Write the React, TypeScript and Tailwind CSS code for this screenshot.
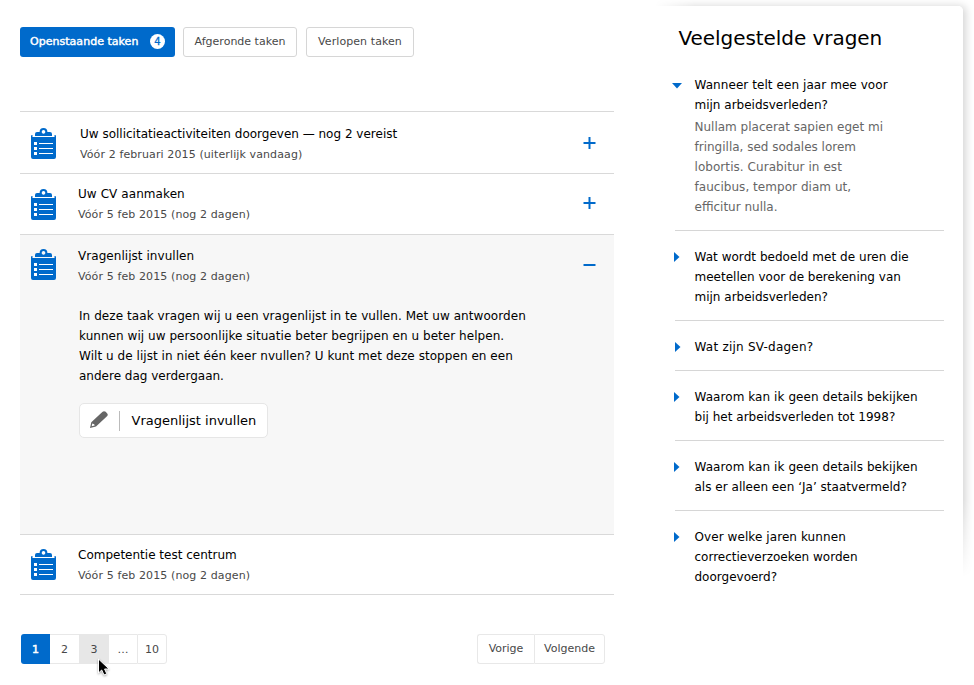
import type { ReactNode } from "react";

function ClipboardIcon() {
  return (
    <svg width="25" height="31" viewBox="0 0 25 31" className="block shrink-0">
      <path
        fillRule="evenodd"
        fill="#006acb"
        d="M0 8q0-1 1-1h.5v2H23.500V7H24q1 0 1 1V29q0 2-2 2H2Q0 31 0 29ZM4 8V6Q4 4 6 4H8.600A3.900 3.900 0 0 1 16.400 4H19Q21 4 21 6V8ZM12.500 2.100a1.800 1.800 0 1 0 .01 0Z"
      />
      <path d="M3 14h3v3H3zM3 19h3v3H3zM3 24h3v3H3z" fill="#fff" />
      <path d="M8 15h14v1H8zM8 20h14v1H8zM8 25h14v1H8z" fill="#fff" />
    </svg>
  );
}

function Toggle({ open }: { open?: boolean }) {
  return (
    <svg width="13" height="13" viewBox="0 0 13 13" className="block shrink-0">
      <path d="M.5 6h12" stroke="#006acb" strokeWidth="2" />
      {!open && <path d="M6.500 0v12" stroke="#006acb" strokeWidth="2" />}
    </svg>
  );
}

type TaskProps = {
  title: string;
  due: string;
  titleClass: string;
  rowClass: string;
  iconClass: string;
  textClass: string;
  toggle?: ReactNode;
  children?: ReactNode;
};

function Task({ title, due, titleClass, rowClass, iconClass, textClass, toggle, children }: TaskProps) {
  return (
    <li className={`flex border-t border-[#d9d9d9] pl-[11px] ${rowClass}`}>
      <div className={`w-[25px] shrink-0 ${iconClass}`}>
        <ClipboardIcon />
      </div>
      <div className={`min-w-0 flex-1 whitespace-nowrap ${textClass}`}>
        <h3 className={`text-[12px] leading-5 text-black ${titleClass}`}>{title}</h3>
        <p className="mt-px text-[11px] leading-5 tracking-[0.110px] text-[#484848]">{due}</p>
        {children}
      </div>
      {toggle}
    </li>
  );
}

type Faq = { lines: [string, string][]; shift?: boolean };

const faqs: Faq[] = [
  {
    lines: [
      ["Wat wordt bedoeld met de uren die", "tracking-[0.040px]"],
      ["meetellen voor de berekening van", ""],
      ["mijn arbeidsverleden?", ""],
    ],
  },
  { lines: [["Wat zijn SV-dagen?", "tracking-[0.230px]"]], shift: true },
  {
    lines: [
      ["Waarom kan ik geen details bekijken", "tracking-[0.070px]"],
      ["bij het arbeidsverleden tot 1998?", "tracking-[0.020px]"],
    ],
  },
  {
    lines: [
      ["Waarom kan ik geen details bekijken", "tracking-[0.070px]"],
      ["als er alleen een ‘Ja’ staatvermeld?", "tracking-[0.020px]"],
    ],
  },
  {
    lines: [
      ["Over welke jaren kunnen", "tracking-[0.080px]"],
      ["correctieverzoeken worden", ""],
      ["doorgevoerd?", ""],
    ],
  },
];

export default function App() {
  return (
    <div className="relative flex h-[685px] w-[974px] overflow-hidden bg-white font-['Verdana','DejaVu_Sans',sans-serif] text-black">
      <div className="pointer-events-none absolute top-0 left-[655px] h-[577px] w-[319px] overflow-hidden mask-[linear-gradient(to_right,transparent,black_40px),linear-gradient(to_bottom,black_500px,transparent_577px)] mask-intersect">
        <div className="mt-[6px] -ml-5 h-[640px] w-[328px] rounded-[5px] shadow-[3px_0_8px_rgba(0,0,0,0.170)]" />
      </div>

      <main className="ml-5 w-[594px] shrink-0 pt-[27px]">
        <nav className="flex h-[30px] whitespace-nowrap text-[11px] text-[#484848]">
          <button className="flex w-[155px] items-center justify-between rounded-[3px] bg-[#006acb] px-[10px] pb-px text-white">
            <span className="pt-px tracking-[0.030px] [-webkit-text-stroke:0.450px_white]">Openstaande taken</span>
            <span className="flex size-[15px] items-center justify-center rounded-full bg-white text-[10px] text-[#006acb] [-webkit-text-stroke:0.300px_#006acb]">4</span>
          </button>
          <button className="ml-2 w-[114px] rounded-[3px] border border-[#d6d6d6] pt-px">Afgeronde taken</button>
          <button className="ml-[9px] w-[108px] rounded-[3px] border border-[#d6d6d6] pt-px tracking-[0.080px]">Verlopen taken</button>
        </nav>

        <ul className="mt-[54px] border-b border-[#d9d9d9]">
          <Task
            title="Uw sollicitatieactiviteiten doorgeven — nog 2 vereist"
            due="Vóór 2 februari 2015 (uiterlijk vandaag)"
            titleClass=""
            rowClass="h-[62px]"
            iconClass="pt-4"
            textClass="ml-6 pt-3"
            toggle={<div className="mt-[25px] mr-[18px]"><Toggle /></div>}
          />
          <Task
            title="Uw CV aanmaken"
            due="Vóór 5 feb 2015 (nog 2 dagen)"
            titleClass="tracking-[0.080px]"
            rowClass="h-[61px]"
            iconClass="pt-[15px]"
            textClass="ml-[22px] pt-[10px]"
            toggle={<div className="mt-[23px] mr-[18px]"><Toggle /></div>}
          />
          <Task
            title="Vragenlijst invullen"
            due="Vóór 5 feb 2015 (nog 2 dagen)"
            titleClass="tracking-[0.050px]"
            rowClass="h-[300px] bg-[#f7f7f7]"
            iconClass="pt-[14px]"
            textClass="ml-[22px] pt-[11px]"
            toggle={<div className="mt-6 mr-[18px]"><Toggle open /></div>}
          >
            <div className="ml-px pt-[19px] text-[12px] leading-5 tracking-[0.070px]">
              <p>In deze taak vragen wij u een vragenlijst in te vullen. Met uw antwoorden</p>
              <p className="tracking-[0.050px]">kunnen wij uw persoonlijke situatie beter begrijpen en u beter helpen.</p>
              <p className="tracking-[0.050px]">Wilt u de lijst in niet één keer nvullen? U kunt met deze stoppen en een</p>
              <p className="tracking-normal">andere dag verdergaan.</p>
            </div>
            <button className="mt-[17px] ml-px flex h-[35px] w-[189px] items-center rounded-[5px] border border-[#e6e6e6] bg-white pl-[10px] text-[13px]">
              <svg width="18" height="17" viewBox="0 0 18 17" className="mb-[2px]">
                <path
                  fillRule="evenodd"
                  fill="#666"
                  d="M0 17 1.300 11.200 12.300.900Q14 -.5 15.700.800L17 2.200Q18.500 3.800 17 5.300L6 15.500ZM2.300 12.500 1.700 15.300 4.700 14.500 4.200 13.200Z"
                />
              </svg>
              <span className="ml-[11px] h-5 w-px bg-[#bbb]" />
              <span className="ml-[11.500px]">Vragenlijst invullen</span>
            </button>
          </Task>
          <Task
            title="Competentie test centrum"
            due="Vóór 5 feb 2015 (nog 2 dagen)"
            titleClass=""
            rowClass="h-[60px]"
            iconClass="pt-[14px]"
            textClass="ml-[22px] pt-[10px]"
          />
        </ul>

        <div className="mt-[39px] flex h-[30px] justify-between pr-[9px] pl-px text-[11px] text-[#484848]">
          <div className="flex">
            <button className="w-[29px] rounded-l-[3px] bg-[#006acb] pt-[2px] text-white [-webkit-text-stroke:0.500px_white]">1</button>
            <button className="w-[29px] border-y border-[#e8e8e8] pt-[2px]">2</button>
            <button className="w-[30px] bg-[#e7e7e7] pt-[2px]">3</button>
            <button className="w-[28px] border-y border-[#e8e8e8] pt-[2px]">…</button>
            <button className="w-[30px] rounded-r-[3px] border border-[#e8e8e8] pt-[2px]">10</button>
          </div>
          <div className="flex">
            <button className="w-[57px] rounded-l-[3px] border border-r-0 border-[#e8e8e8]">Vorige</button>
            <button className="w-[71px] rounded-r-[3px] border border-[#e8e8e8]">Volgende</button>
          </div>
        </div>
      </main>

      <aside className="relative mt-[6px] ml-[46px] h-[640px] w-[303px] shrink-0 rounded-tr-[5px] bg-white">
        <h2 className="ml-[18.500px] pt-[18px] text-[20px] leading-[28px] tracking-[-0.060px]">Veelgestelde vragen</h2>
        <section className="mt-[23px] ml-[15px] w-[268.500px] border-b border-[#d6d6d6] pb-[13px] pl-[19.500px] text-[12px] leading-5 whitespace-nowrap">
          <div className="flex">
            <svg width="10" height="6" className="mt-[8px] mr-[12.500px] -ml-[22.500px]">
              <path d="M0 0h10L5 5.500Z" fill="#006acb" />
            </svg>
            <h3>
              <span className="block tracking-[0.070px]">Wanneer telt een jaar mee voor</span>
              <span className="block">mijn arbeidsverleden?</span>
            </h3>
          </div>
          <div className="mt-[2px] text-[#666]">
            <p>Nullam placerat sapien eget mi</p>
            <p>fringilla, sed sodales lorem</p>
            <p className="tracking-[0.060px]">lobortis. Curabitur in est</p>
            <p className="tracking-[0.040px]">faucibus, tempor diam ut,</p>
            <p>efficitur nulla.</p>
          </div>
        </section>
        {faqs.map((faq, i) => (
          <section
            key={i}
            className={`ml-[15px] flex w-[268.500px] pt-4 pb-[13px] text-[12px] leading-5 whitespace-nowrap ${i < 4 ? "border-b border-[#d6d6d6]" : ""}`}
          >
            <svg width="6" height="10" className={`mt-[5px] ${faq.shift ? "mr-[13.500px]" : "mr-[14.500px] -ml-px"}`}>
              <path d="M0 0v10L5.500 5Z" fill="#006acb" />
            </svg>
            <h3>
              {faq.lines.map(([text, tracking]) => (
                <span key={text} className={`block ${tracking}`}>{text}</span>
              ))}
            </h3>
          </section>
        ))}
      </aside>

      <svg width="18" height="22" viewBox="0 0 18 22" className="absolute top-[658px] left-[97px] drop-shadow-[0_1px_1px_rgba(0,0,0,0.350)]">
        <path d="M1.500 1v14l3.200-3 2.300 5 2.800-1.200-2.200-4.800H12Z" fill="#000" stroke="#fff" />
      </svg>
    </div>
  );
}
